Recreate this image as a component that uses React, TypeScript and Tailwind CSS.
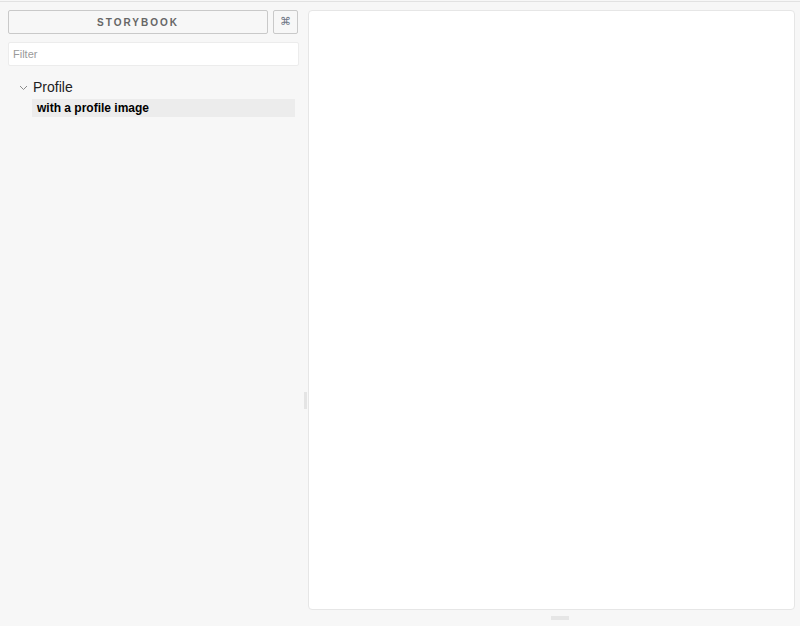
import React from "react";

const font = { fontFamily: '"Liberation Sans", Arial, sans-serif' };

const Chevron = () => (
  <svg width="9" height="6" viewBox="0 0 9 6" className="shrink-0">
    <path d="M1 1l3.5 3.5L8 1" fill="none" stroke="#8a8a8a" strokeWidth="1" />
  </svg>
);

const Sidebar = () => (
  <aside className="flex w-[302px] shrink-0 flex-col pl-2 pr-[4px] pt-2">
    <div className="flex gap-[5px]">
      <button className="flex h-[24px] w-[261px] items-center justify-center rounded-[2px] border border-[#c9c9c9] bg-[#f7f7f7] text-[10px] font-bold tracking-[2px] text-[#666]">
        STORYBOOK
      </button>
      <button className="flex h-[24px] w-[25px] items-center justify-center rounded-[2px] border border-[#c9c9c9] bg-[#f7f7f7] text-[11px] text-[#6f7686]" style={{ fontFamily: '"DejaVu Sans", sans-serif' }}>
        ⌘
      </button>
    </div>
    <div className="mt-[8px] flex h-[24px] w-[291px] items-center rounded-[2px] border border-[#ececec] bg-white px-[4px] text-[11px] text-[#9a9a9a]">
      Filter
    </div>
    <ul className="mt-[12px]">
      <li className="flex h-[19px] items-center gap-[5px] pl-[11px] text-[14px] text-[#222]">
        <Chevron />
        <span>Profile</span>
      </li>
      <li className="ml-[24px] mt-[2px] flex h-[18px] w-[263px] items-center bg-[#ececec] pl-[5px] text-[12px] font-bold text-black">
        with a profile image
      </li>
    </ul>
  </aside>
);

export default function App() {
  return (
    <div className="flex h-[626px] w-[800px] flex-col bg-[#f7f7f7]" style={font}>
      <div className="mt-px h-px bg-[#e2e2e2]" />
      <div className="flex min-h-0 flex-1">
        <Sidebar />
        {/* sidebar drag handle */}
        <div className="flex w-[6px] shrink-0 justify-center pt-[390px]">
          <div className="h-[17px] w-[3px] bg-[#e4e4e4]" />
        </div>
        <div className="flex flex-1 flex-col pr-[5px] pt-[8px]">
          <div className="flex-1 rounded-[4px] border border-[#e6e6e6] bg-white" />
          <div className="flex h-[16px] items-center justify-center">
            <div className="ml-[16px] h-[4px] w-[18px] bg-[#e6e6e6]" />
          </div>
        </div>
      </div>
    </div>
  );
}
